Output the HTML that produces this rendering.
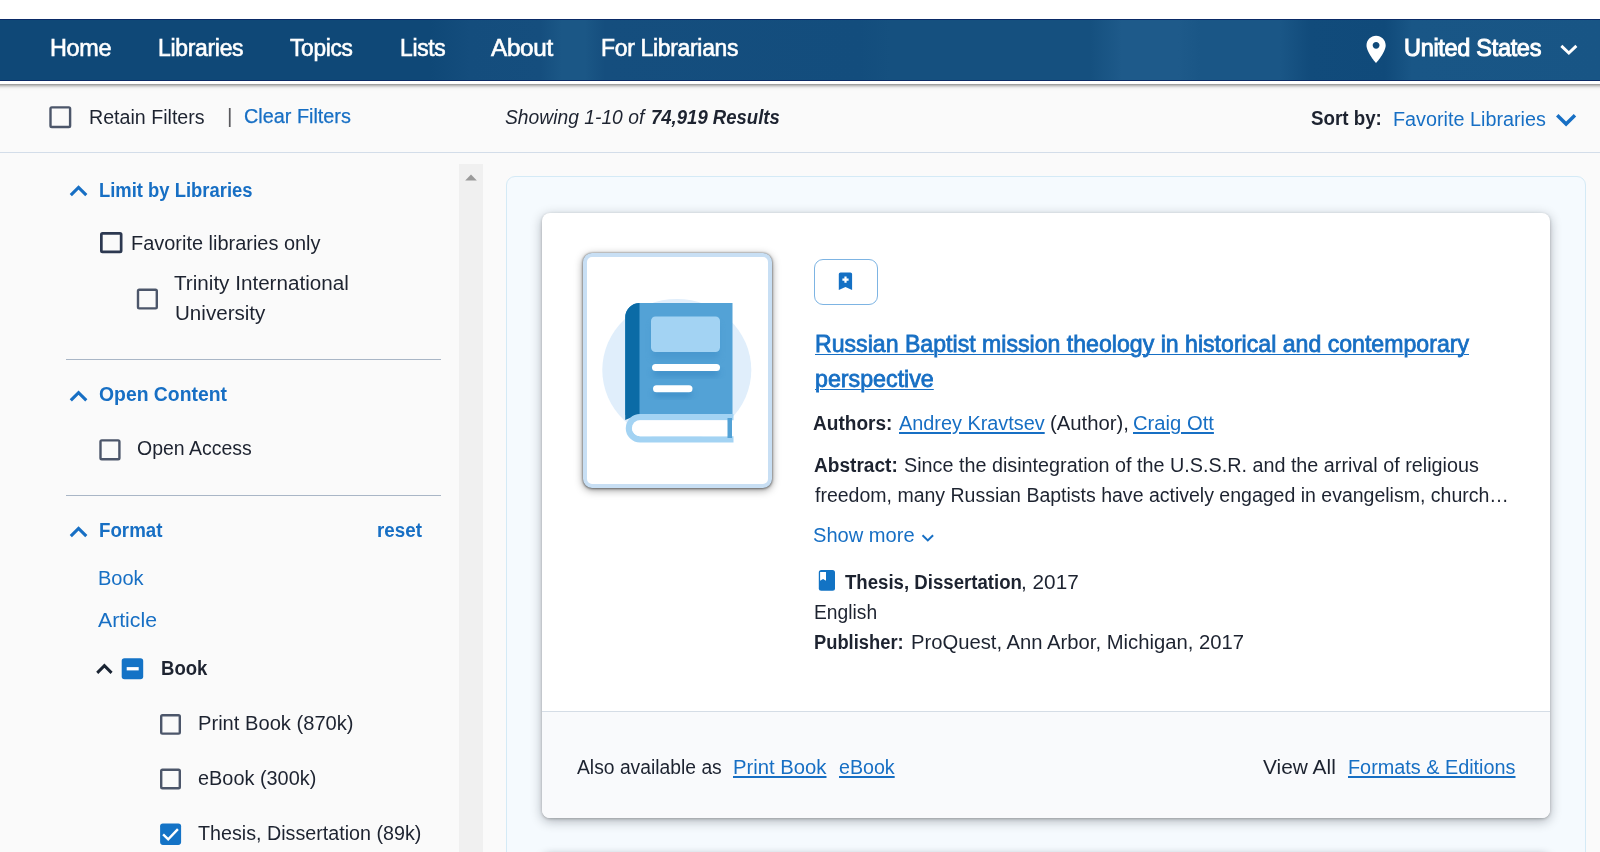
<!DOCTYPE html><html lang="en"><head><meta charset="utf-8"><title>Search results</title><style>

html,body{margin:0;padding:0;width:1600px;height:852px;overflow:hidden}
#root{position:relative;width:1600px;height:852px;overflow:hidden;background:#fafafa}
body{width:1600px;height:852px;overflow:hidden;background:#fafafa;position:relative;font-family:"Liberation Sans", sans-serif;color:#1d2330}
.a{position:absolute}
.t{position:absolute;white-space:nowrap;transform-origin:0 0;line-height:1.2}
.t a{color:#176fc4;text-decoration:underline;text-decoration-thickness:1.5px;text-underline-offset:2.4px}
.t b{font-weight:700}
.g{display:inline-block;width:8.6px}
.h{display:inline-block;width:13px}

</style></head><body><div id="root">
<div class="a" style="left:-30px;top:0;width:1660px;height:84px;background:#fff;box-shadow:0 1px 4px rgba(0,0,0,.6)"></div>
<div class="a" style="left:0;top:19px;width:1600px;height:62px;background:linear-gradient(90deg,#0f4877 0,#0f4877 430px,#144d7d 470px,#154e7e 540px,#1b5786 562px,#1b5786 585px,#154e7e 605px,#134d7d 860px,#15507f 890px,#15507f 1090px,#1e5a8a 1122px,#1e5a8a 1178px,#1a5686 1200px,#1a5686 1280px,#114b7b 1310px,#104a7a 1385px,#195686 1412px,#185585 1600px);box-shadow:inset 0 1px 0 #0a2a66,inset 0 -1px 0 #0a2a66"></div>
<div class="a" style="left:0;top:151.500px;width:1600px;height:1.300px;background:#d3dde9"></div>
<div class="a" style="left:459px;top:164.300px;width:24px;height:700px;background:#f0f0f0"></div>
<div class="a" style="left:66px;top:359px;width:375px;height:1.200px;background:#a9b6c6"></div>
<div class="a" style="left:66px;top:494.700px;width:375px;height:1.200px;background:#a9b6c6"></div>
<div class="a" style="left:506px;top:176px;width:1078px;height:720px;background:#f5fafe;border:1px solid #d4eaf6;border-radius:9px"></div>
<div class="a" style="left:542px;top:212.500px;width:1008px;height:605.500px;background:#fff;border-radius:8px;box-shadow:0 1px 3px rgba(0,0,0,.22),0 3px 12px rgba(10,15,25,.3);overflow:hidden"><div class="a" style="left:0;top:498px;width:1008px;height:108px;background:#f9fafc;border-top:1.300px solid #d5dde6"></div></div>
<div class="a" style="left:542px;top:852.500px;width:1008px;height:60px;background:#fff;border-radius:8px;box-shadow:0 2px 9px rgba(20,30,50,.38)"></div>
<div class="a" style="left:583px;top:252.700px;width:180.700px;height:227.100px;background:#fff;border:4.200px solid #c8dff4;border-radius:9px;box-shadow:0 0 2px rgba(0,0,0,.45),0 1px 3px rgba(0,0,0,.35),0 2px 9px rgba(0,0,0,.4)"></div>

<svg style="position:absolute;left:588px;top:257px" width="179" height="227" viewBox="588 257 179 227">
<defs><filter id="sh" x="-20%" y="-20%" width="140%" height="160%"><feGaussianBlur stdDeviation="3"/></filter></defs>
<ellipse cx="676.800" cy="370" rx="74.500" ry="71" fill="#e0eefb"/>
<path d="M639 303h93.500v112H625.200v-97.500a14.500 14.500 0 0 1 13.800-14.500z" fill="#53a2d6"/>
<path d="M639.500 303a14.500 14.500 0 0 0-14.300 14.500V420l14.300-6z" fill="#0b6ba6"/>
<rect x="652" y="320.500" width="67" height="35" rx="4" fill="#3f8fc8" opacity=".5" filter="url(#sh)" transform="translate(0,3)"/>
<rect x="651" y="316.500" width="69" height="35.500" rx="4.500" fill="#a3d3f3"/>
<rect x="653" y="366" width="66" height="7" rx="3.500" fill="#2f7fbd" opacity=".55" filter="url(#sh)" transform="translate(0,3)"/><rect x="654" y="387" width="38" height="7" rx="3.500" fill="#2f7fbd" opacity=".55" filter="url(#sh)" transform="translate(0,3)"/><rect x="652" y="364" width="68" height="7" rx="3.500" fill="#fff"/>
<rect x="653" y="385.300" width="39.500" height="7" rx="3.500" fill="#fff"/>
<path d="M640 414h93.500v6.200H640a8 8 0 0 0 0 16h93.500v6.300H640a14.200 14.200 0 0 1 0-28.500z" fill="#a3d3f3"/>
<path d="M640 420.200h87.500v16H640a8 8 0 0 1 0-16z" fill="#fff"/>
<rect x="727.500" y="418" width="4.500" height="20" fill="#53a2d6"/>
</svg>
<div class="a" style="left:814px;top:259px;width:62px;height:43.500px;border:1px solid #7db4e3;border-radius:9px;background:#fff"></div>
<svg class="a" style="left:0;top:0" width="1600" height="852" viewBox="0 0 1600 852"><g transform="translate(1359.65,33.01) scale(1.37)"><path fill="#fff" d="M12 2C8.13 2 5 5.13 5 9c0 5.25 7 13 7 13s7-7.75 7-13c0-3.870-3.130-7-7-7zm0 9.500c-1.380 0-2.500-1.120-2.500-2.500s1.120-2.500 2.500-2.500 2.500 1.120 2.500 2.500-1.120 2.500-2.500 2.500z"/></g>
<polyline points="1561.33,45.83 1568.85,53.05 1576.37,45.83" fill="none" stroke="#fff" stroke-width="2.90" stroke-linejoin="miter"/>
<polyline points="1557.24,115.34 1566.10,124.03 1574.96,115.34" fill="none" stroke="#176fc4" stroke-width="3.50" stroke-linejoin="miter"/>
<polyline points="70.80,195.20 78.55,187.49 86.30,195.20" fill="none" stroke="#176fc4" stroke-width="3.10" stroke-linejoin="miter"/>
<polyline points="70.80,400.40 78.55,392.69 86.30,400.40" fill="none" stroke="#176fc4" stroke-width="3.10" stroke-linejoin="miter"/>
<polyline points="70.80,536.10 78.55,528.39 86.30,536.10" fill="none" stroke="#176fc4" stroke-width="3.10" stroke-linejoin="miter"/>
<polyline points="97.23,672.87 104.40,665.65 111.57,672.87" fill="none" stroke="#1a2433" stroke-width="2.90" stroke-linejoin="miter"/>
<polyline points="922.51,535.21 927.80,540.39 933.09,535.21" fill="none" stroke="#176fc4" stroke-width="2.00" stroke-linejoin="miter"/>
<path fill="#4c566a" fill-rule="evenodd" d="M51.80 106.20h17.00a2.5 2.5 0 0 1 2.5 2.5v17.00a2.5 2.5 0 0 1 -2.5 2.5h-17.00a2.5 2.5 0 0 1 -2.5 -2.5v-17.00a2.5 2.5 0 0 1 2.5 -2.5zM51.70 108.60v17.20h17.20v-17.20z"/>
<path fill="#2c3850" fill-rule="evenodd" d="M102.50 232.00h17.50a2.5 2.5 0 0 1 2.5 2.5v16.30a2.5 2.5 0 0 1 -2.5 2.5h-17.50a2.5 2.5 0 0 1 -2.5 -2.5v-16.30a2.5 2.5 0 0 1 2.5 -2.5zM102.70 234.70v15.90h17.10v-15.90z"/>
<path fill="#4c566a" fill-rule="evenodd" d="M139.30 288.60h16.20a2.5 2.5 0 0 1 2.5 2.5v16.00a2.5 2.5 0 0 1 -2.5 2.5h-16.20a2.5 2.5 0 0 1 -2.5 -2.5v-16.00a2.5 2.5 0 0 1 2.5 -2.5zM139.20 291.00v16.20h16.40v-16.20z"/>
<path fill="#4c566a" fill-rule="evenodd" d="M101.80 439.20h16.30a2.5 2.5 0 0 1 2.5 2.5v16.30a2.5 2.5 0 0 1 -2.5 2.5h-16.30a2.5 2.5 0 0 1 -2.5 -2.5v-16.30a2.5 2.5 0 0 1 2.5 -2.5zM101.70 441.60v16.50h16.50v-16.50z"/>
<path fill="#4c566a" fill-rule="evenodd" d="M162.50 714.00h16.00a2.5 2.5 0 0 1 2.5 2.5v15.80a2.5 2.5 0 0 1 -2.5 2.5h-16.00a2.5 2.5 0 0 1 -2.5 -2.5v-15.80a2.5 2.5 0 0 1 2.5 -2.5zM162.40 716.40v16.00h16.20v-16.00z"/>
<path fill="#4c566a" fill-rule="evenodd" d="M162.50 768.60h16.00a2.5 2.5 0 0 1 2.5 2.5v15.80a2.5 2.5 0 0 1 -2.5 2.5h-16.00a2.5 2.5 0 0 1 -2.5 -2.5v-15.80a2.5 2.5 0 0 1 2.5 -2.5zM162.40 771.00v16.00h16.20v-16.00z"/>
<rect x="121.7" y="658.2" width="21.5" height="21.1" rx="2.8" fill="#1473c6"/>
<rect x="126.7" y="667.1" width="12" height="3.3" fill="#fff"/>
<rect x="160.1" y="823.5" width="21" height="21.4" rx="2.8" fill="#1473c6"/>
<polyline points="163.1,834.4 168.2,839.4 177.9,829.2" fill="none" stroke="#fff" stroke-width="2.4"/>
<polygon points="465.2,180.6 476.8,180.6 471,174.6" fill="#9a9a9a"/>
<path fill="#1470c4" d="M838.8 274.100a1.700 1.700 0 0 1 1.700-1.700h9.900a1.700 1.700 0 0 1 1.700 1.700V290l-6.650-3-6.650 3z"/>
<path fill="#fff" d="M844.4 276.600h2.200v2h2v2.200h-2v2h-2.200v-2h-2v-2.200h2z"/>
<rect x="818.8" y="570.100" width="16.200" height="20.600" rx="2.500" fill="#1273c4"/>
<path fill="#fff" d="M820.100 572h5.900v8.800l-2.950-1.700-2.950 1.700z"/></svg>
<header><nav aria-label="Main">
<div class="t" id="t0" style="left:49.6px;top:34.73px;font-size:23px;transform:scaleX(1.0180);color:#fff;-webkit-text-stroke:0.6px #fff;letter-spacing:-0.3px;">Home</div>
<div class="t" id="t1" style="left:157.6px;top:34.73px;font-size:23px;transform:scaleX(0.9974);color:#fff;-webkit-text-stroke:0.6px #fff;letter-spacing:-0.3px;">Libraries</div>
<div class="t" id="t2" style="left:290.0px;top:34.73px;font-size:23px;transform:scaleX(0.9867);color:#fff;-webkit-text-stroke:0.6px #fff;letter-spacing:-0.3px;">Topics</div>
<div class="t" id="t3" style="left:400.1px;top:34.73px;font-size:23px;transform:scaleX(0.9920);color:#fff;-webkit-text-stroke:0.6px #fff;letter-spacing:-0.3px;">Lists</div>
<div class="t" id="t4" style="left:491.2px;top:34.73px;font-size:23px;transform:scaleX(1.0558);color:#fff;-webkit-text-stroke:0.6px #fff;letter-spacing:-0.3px;">About</div>
<div class="t" id="t5" style="left:601.2px;top:34.73px;font-size:23px;transform:scaleX(0.9965);color:#fff;-webkit-text-stroke:0.6px #fff;letter-spacing:-0.3px;">For Librarians</div>
<div class="t" id="t6" style="left:1403.9px;top:34.73px;font-size:23px;transform:scaleX(1.0216);color:#fff;-webkit-text-stroke:0.95px #fff;letter-spacing:-0.3px;">United States</div>
</nav></header><section aria-label="Result tools">
<div class="t" id="t7" style="left:88.6px;top:105.07px;font-size:20px;transform:scaleX(0.9811);">Retain Filters</div>
<div class="t" id="t8" style="left:227.3px;top:103.02px;font-size:21px;transform:scaleX(1.0057);color:#5a5a5e;">|</div>
<div class="t" id="t9" style="left:243.8px;top:104.07px;font-size:20px;transform:scaleX(0.9916);color:#176fc4;-webkit-text-stroke:0.25px #176fc4;">Clear Filters</div>
<div class="t" id="t10" style="left:505.2px;top:105.07px;font-size:20px;transform:scaleX(0.9634);font-style:italic;">Showing 1-10 of</div>
<div class="t" id="t11" style="left:651.2px;top:105.07px;font-size:20px;transform:scaleX(0.9269);font-style:italic;font-weight:700;">74,919 Results</div>
<div class="t" id="t12" style="left:1310.9px;top:106.07px;font-size:20px;transform:scaleX(0.9378);font-weight:700;">Sort by:</div>
<div class="t" id="t13" style="left:1393.0px;top:107.07px;font-size:20px;transform:scaleX(0.9895);color:#176fc4;">Favorite Libraries</div>
</section><aside aria-label="Filters">
<div class="t" id="t14" style="left:99.3px;top:178.07px;font-size:20px;transform:scaleX(0.9207);color:#176fc4;font-weight:700;">Limit by Libraries</div>
<div class="t" id="t15" style="left:131.4px;top:231.07px;font-size:20px;transform:scaleX(0.9969);">Favorite libraries only</div>
<div class="t" id="t16" style="left:174.2px;top:271.07px;font-size:20px;transform:scaleX(1.0323);">Trinity International</div>
<div class="t" id="t17" style="left:174.7px;top:301.07px;font-size:20px;transform:scaleX(1.0294);">University</div>
<div class="t" id="t18" style="left:98.7px;top:382.07px;font-size:20px;transform:scaleX(0.9678);color:#176fc4;font-weight:700;">Open Content</div>
<div class="t" id="t19" style="left:136.8px;top:436.07px;font-size:20px;transform:scaleX(0.9732);">Open Access</div>
<div class="t" id="t20" style="left:99.2px;top:518.07px;font-size:20px;transform:scaleX(0.9360);color:#176fc4;font-weight:700;">Format</div>
<div class="t" id="t21" style="left:376.6px;top:518.07px;font-size:20px;transform:scaleX(0.9395);color:#176fc4;font-weight:700;">reset</div>
<div class="t" id="t22" style="left:97.9px;top:566.07px;font-size:20px;transform:scaleX(1.0008);color:#176fc4;">Book</div>
<div class="t" id="t23" style="left:98.0px;top:608.07px;font-size:20px;transform:scaleX(1.0613);color:#176fc4;">Article</div>
<div class="t" id="t24" style="left:160.5px;top:656.07px;font-size:20px;transform:scaleX(0.9264);font-weight:700;">Book</div>
<div class="t" id="t25" style="left:198.2px;top:711.07px;font-size:20px;transform:scaleX(1.0069);">Print Book (870k)</div>
<div class="t" id="t26" style="left:197.8px;top:766.07px;font-size:20px;transform:scaleX(0.9945);">eBook (300k)</div>
<div class="t" id="t27" style="left:197.9px;top:821.07px;font-size:20px;transform:scaleX(0.9849);">Thesis, Dissertation (89k)</div>
</aside><main><article>
<div class="t" id="t28" style="left:815.0px;top:330.08px;font-size:24px;transform:scaleX(0.9632);color:#176fc4;text-decoration:underline;text-decoration-thickness:0.3px;text-underline-offset:2.1px;-webkit-text-stroke:0.8px #176fc4;">Russian Baptist mission theology in historical and contemporary</div>
<div class="t" id="t29" style="left:815.0px;top:365.08px;font-size:24px;transform:scaleX(0.9679);color:#176fc4;text-decoration:underline;text-decoration-thickness:0.3px;text-underline-offset:2.1px;-webkit-text-stroke:0.8px #176fc4;">perspective</div>
<div class="t" id="t30" style="left:813.2px;top:411.07px;font-size:20px;transform:scaleX(0.9531);font-weight:700;">Authors:</div>
<div class="t" id="t31" style="left:899.3px;top:411.07px;font-size:20px;transform:scaleX(0.9930);"><a>Andrey Kravtsev</a></div>
<div class="t" id="t32" style="left:1049.8px;top:411.07px;font-size:20px;transform:scaleX(1.0153);">(Author),</div>
<div class="t" id="t33" style="left:1133.3px;top:411.07px;font-size:20px;transform:scaleX(1.0109);"><a>Craig Ott</a></div>
<div class="t" id="t34" style="left:814.2px;top:453.07px;font-size:20px;transform:scaleX(0.9540);font-weight:700;">Abstract:</div>
<div class="t" id="t35" style="left:903.5px;top:453.07px;font-size:20px;transform:scaleX(0.9886);">Since the disintegration of the U.S.S.R. and the arrival of religious</div>
<div class="t" id="t36" style="left:814.8px;top:483.07px;font-size:20px;transform:scaleX(0.9752);">freedom, many Russian Baptists have actively engaged in evangelism, church…</div>
<div class="t" id="t37" style="left:813.4px;top:523.07px;font-size:20px;transform:scaleX(1.0048);color:#176fc4;">Show more</div>
<div class="t" id="t38" style="left:844.7px;top:570.07px;font-size:20px;transform:scaleX(0.9308);font-weight:700;">Thesis, Dissertation</div>
<div class="t" id="t39" style="left:1020.8px;top:570.07px;font-size:20px;transform:scaleX(1.0385);">, 2017</div>
<div class="t" id="t40" style="left:814.2px;top:600.07px;font-size:20px;transform:scaleX(0.9618);">English</div>
<div class="t" id="t41" style="left:814.2px;top:630.07px;font-size:20px;transform:scaleX(0.9165);font-weight:700;">Publisher:</div>
<div class="t" id="t42" style="left:910.7px;top:630.07px;font-size:20px;transform:scaleX(1.0116);">ProQuest, Ann Arbor, Michigan, 2017</div>
<div class="t" id="t43" style="left:576.7px;top:755.07px;font-size:20px;transform:scaleX(0.9645);">Also available as</div>
<div class="t" id="t44" style="left:733.3px;top:755.07px;font-size:20px;transform:scaleX(1.0134);"><a>Print Book</a></div>
<div class="t" id="t45" style="left:839.3px;top:755.07px;font-size:20px;transform:scaleX(0.9820);"><a>eBook</a></div>
<div class="t" id="t46" style="left:1263.2px;top:755.07px;font-size:20px;transform:scaleX(1.0446);">View All</div>
<div class="t" id="t47" style="left:1347.5px;top:755.07px;font-size:20px;transform:scaleX(0.9914);"><a>Formats &amp; Editions</a></div>
</article></main>
</div></body></html>
